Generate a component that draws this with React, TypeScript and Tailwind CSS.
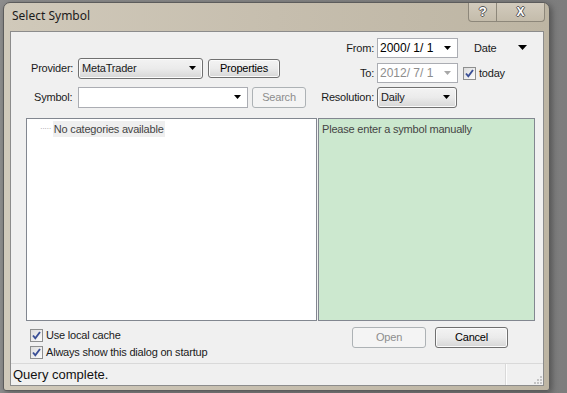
import React from 'react';

function Arrow({ color = '#000', w = 7 }: { color?: string; w?: number }) {
  return (
    <svg width={w} height={Math.ceil(w / 2) + 1} viewBox={`0 0 ${w} ${Math.ceil(w / 2) + 1}`}>
      <polygon points={`0,0 ${w},0 ${w / 2},${Math.ceil(w / 2)}`} fill={color} />
    </svg>
  );
}

function Check({ checked = true }: { checked?: boolean }) {
  return (
    <span className="w-[13px] h-[13px] shrink-0 border border-[#8e8f8f] bg-gradient-to-br from-[#dcdcdc] to-[#fcfcfc] flex items-center justify-center">
      {checked && (
        <svg width="11" height="11" viewBox="0 0 11 11">
          <path d="M2 5.5 L4.3 8.3 L9 2" stroke="#3a4f96" strokeWidth="1.9" fill="none" />
        </svg>
      )}
    </span>
  );
}

function Btn({ label, w, h = 21, disabled = false }: { label: string; w: number; h?: number; disabled?: boolean }) {
  return (
    <div
      style={{ width: w, height: h }}
      className={
        disabled
          ? 'shrink-0 rounded-[3px] border border-[#adb2b5] bg-[#f4f4f4] text-[#8d8d8d] flex items-center justify-center'
          : 'shrink-0 rounded-[3px] border border-[#707070] bg-gradient-to-b from-[#f3f3f3] via-[#ebebeb] to-[#d6d6d6] text-black flex items-center justify-center shadow-[inset_0_0_0_1px_#fbfbfb]'
      }
    >
      {label}
    </div>
  );
}

function DropBtn({ label, w }: { label: string; w: number }) {
  return (
    <div
      style={{ width: w }}
      className="shrink-0 h-[21px] rounded-[3px] border border-[#707070] bg-gradient-to-b from-[#f3f3f3] via-[#ebebeb] to-[#d6d6d6] shadow-[inset_0_0_0_1px_#fbfbfb] flex items-center pl-[3px] pr-[6px]"
    >
      <span className="flex-1">{label}</span>
      <Arrow />
    </div>
  );
}

function DateBox({ value, disabled = false }: { value: string; disabled?: boolean }) {
  return (
    <div className="w-[81px] h-[20px] shrink-0 border border-[#abadb3] bg-white flex items-center pl-[2px] pr-[6px] text-[12px] tracking-normal whitespace-pre">
      <span className={disabled ? 'flex-1 text-[#8d8d8d]' : 'flex-1 text-black'}>{value}</span>
      <Arrow color={disabled ? '#a8a8a8' : '#000'} w={7} />
    </div>
  );
}

export default function App() {
  return (
    <div className="w-[567px] h-[393px] bg-gradient-to-r from-[#8d8d8d] to-[#7d7d7d] pt-[2px] pl-[3px] overflow-hidden font-['Liberation_Sans',Arial,sans-serif] text-[11px] tracking-[-0.2px] text-[#1a1a1a]">
      {/* Window frame */}
      <div className="w-[547px] h-[389px] rounded-t-[7px] rounded-b-[3px] border border-[#5c5c5c] bg-gradient-to-r from-[#d0c9ba] via-[#c6beae] to-[#bdb5a3] flex flex-col shadow-[2px_2px_6px_rgba(0,0,0,0.35)]">
        {/* Title bar */}
        <div className="h-[28px] shrink-0 flex items-start">
          <div className="pl-[8px] pt-[4px] font-['Noto_Sans',sans-serif] text-[12px] tracking-normal text-[#1b1b1b]">Select Symbol</div>
          <div className="ml-auto mr-[4px] flex">
            <div className="w-[29px] h-[19px] border border-t-0 border-[#8d877a] rounded-bl-[4px] bg-gradient-to-b from-[#d2cbbd] to-[#c4bcab] flex items-center justify-center text-[13px] font-bold text-white [text-shadow:1px_0_0_#555,-1px_0_0_#555,0_1px_0_#555,0_-1px_0_#555]">
              ?
            </div>
            <div className="w-[48px] h-[19px] border border-t-0 border-l-0 border-[#8d877a] rounded-br-[4px] bg-gradient-to-b from-[#d2cbbd] to-[#c4bcab] flex items-center justify-center text-[12px] font-bold text-white [text-shadow:1px_0_0_#555,-1px_0_0_#555,0_1px_0_#555,0_-1px_0_#555]">
              X
            </div>
          </div>
        </div>

        {/* Client area */}
        <div className="ml-[6px] w-[534px] h-[355px] border border-[#8c8c8c] bg-[#f0f0f0] flex flex-col">
          {/* Top controls */}
          <div className="h-[86px] shrink-0 flex items-start">
            <div className="ml-[20px] mt-[26px] w-[275px] flex flex-col gap-[8px]">
              <div className="flex items-center">
                <span className="w-[47px]">Provider:</span>
                <DropBtn label="MetaTrader" w={125} />
                <div className="ml-[5px]">
                  <Btn label="Properties" w={72} h={19} />
                </div>
              </div>
              <div className="flex items-center">
                <span className="w-[47px] pl-[3px]">Symbol:</span>
                <div className="w-[171px] h-[21px] border border-[#abadb3] bg-white flex items-center justify-end pr-[6px]">
                  <Arrow />
                </div>
                <div className="ml-[4px]">
                  <Btn label="Search" w={54} disabled />
                </div>
              </div>
            </div>
            <div className="ml-[12px] mt-[6px] flex flex-col gap-[5px]">
              <div className="flex items-center">
                <span className="w-[59px] text-right pr-[3px]">From:</span>
                <DateBox value="2000/ 1/ 1" />
                <span className="ml-[16px] w-[44px]">Date</span>
                <Arrow w={9} />
              </div>
              <div className="flex items-center">
                <span className="w-[59px] text-right pr-[3px]">To:</span>
                <DateBox value="2012/ 7/ 1" disabled />
                <span className="ml-[5px]">
                  <Check />
                </span>
                <span className="ml-[3px]">today</span>
              </div>
              <div className="flex items-center -mt-[1px]">
                <span className="w-[59px] text-right pr-[3px]">Resolution:</span>
                <DropBtn label="Daily" w={80} />
              </div>
            </div>
          </div>

          {/* Panels */}
          <div className="ml-[15px] flex gap-[1px] h-[203px] shrink-0">
            <div className="w-[291px] border border-[#828790] bg-white pt-[2px] pl-[13px]">
              <div className="flex items-center h-[16px]">
                <span className="text-[#9a9a9a] text-[8px] tracking-[-0.5px] mr-[2px]">·····</span>
                <span className="bg-[#efefef] px-[1px] h-[16px] flex items-center text-[#444]">No categories available</span>
              </div>
            </div>
            <div className="w-[217px] border border-[#828790] bg-[#cce8cf] pt-[2px] pl-[3px] text-[#444]">
              Please enter a symbol manually
            </div>
          </div>

          {/* Options & buttons */}
          <div className="flex h-[42px] shrink-0">
            <div className="ml-[19px] mt-[8px] flex flex-col gap-[4px] leading-[13px]">
              <div className="flex items-center gap-[3px]">
                <Check />
                <span>Use local cache</span>
              </div>
              <div className="flex items-center gap-[3px]">
                <Check />
                <span>Always show this dialog on startup</span>
              </div>
            </div>
            <div className="ml-auto mr-[35px] mt-[6px] flex gap-[9px]">
              <Btn label="Open" w={74} disabled />
              <Btn label="Cancel" w={73} />
            </div>
          </div>

          {/* Status bar */}
          <div className="flex-1 flex items-stretch border-t border-[#d9d9d9]">
            <div className="w-[496px] border-r border-[#fdfdfd] shadow-[inset_-1px_0_0_#d9d9d9] pl-[2px] flex items-center text-[13px] tracking-normal text-[#111]">
              Query complete.
            </div>
            <div className="flex-1 flex items-end justify-end pr-[1px] pb-[1px]">
              <svg width="8" height="8" viewBox="0 0 8 8">
                <rect x="6" y="0" width="2" height="2" fill="#c4c4c4" />
                <rect x="3" y="3" width="2" height="2" fill="#c4c4c4" />
                <rect x="6" y="3" width="2" height="2" fill="#c4c4c4" />
                <rect x="0" y="6" width="2" height="2" fill="#c4c4c4" />
                <rect x="3" y="6" width="2" height="2" fill="#c4c4c4" />
                <rect x="6" y="6" width="2" height="2" fill="#c4c4c4" />
              </svg>
            </div>
          </div>
        </div>
      </div>
    </div>
  );
}
